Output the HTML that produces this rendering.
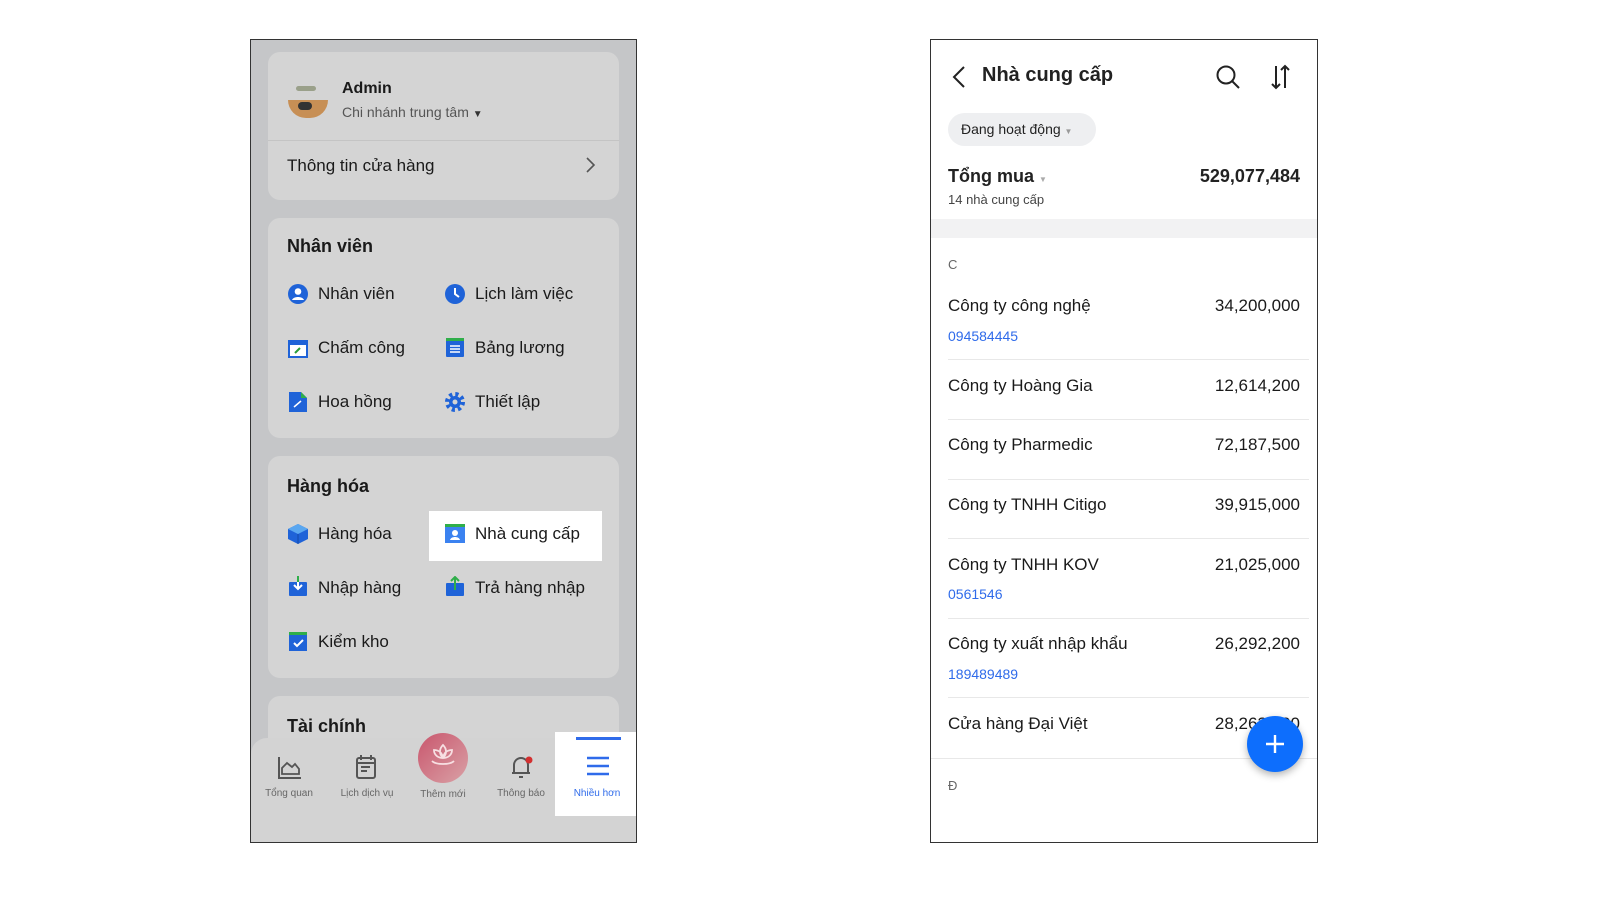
<!DOCTYPE html>
<html><head><meta charset="utf-8"><style>
*{margin:0;padding:0;box-sizing:border-box}
body{width:1600px;height:900px;background:#fff;font-family:"Liberation Sans",sans-serif;position:relative;overflow:hidden;color:#1a1a1a}
.a{position:absolute}
.ph{position:absolute;border:1px solid #333;overflow:hidden}
.card{position:absolute;background:#d4d4d4;border-radius:12px;left:17px;width:351px}
.t{position:absolute;font-size:17px;white-space:nowrap}
.ic{position:absolute;width:20px;height:20px}
.sep{position:absolute;left:17px;right:8px;height:1px;background:#e8e8e8}
</style></head><body>
<!-- LEFT PHONE -->
<div class="ph" style="left:250px;top:39px;width:387px;height:804px;background:#c5c6c8">
 <div class="card" style="top:12px;height:148px">
  <div class="a" style="left:20px;top:34px;width:40px;height:36px">
   <div class="a" style="left:8px;top:0;width:20px;height:5px;background:#9aa08a;border-radius:3px"></div>
   <div class="a" style="left:0;top:14px;width:40px;height:18px;border-radius:0 0 20px 20px;background:#c78f55"></div>
   <div class="a" style="left:10px;top:16px;width:14px;height:8px;background:#333;border-radius:4px"></div>
  </div>
  <div class="t" style="left:74px;top:28px;font-weight:bold;font-size:16px">Admin</div>
  <div class="t" style="left:74px;top:52px;font-size:14px;color:#555">Chi nhánh trung tâm <span style="font-size:10px;color:#333">▼</span></div>
  <div class="a" style="left:0;right:0;top:88px;height:1px;background:#c4c4c4"></div>
  <div class="t" style="left:19px;top:104px">Thông tin cửa hàng</div>
  <svg class="a" style="left:316px;top:104px" width="14" height="18"><path d="M3 2l7 7-7 7" fill="none" stroke="#555" stroke-width="1.6"/></svg>
 </div>
 <div class="card" style="top:178px;height:220px">
  <div class="t" style="left:19px;top:18px;font-size:18px;font-weight:bold">Nhân viên</div>
  <svg class="ic" style="left:20px;top:66px"><circle cx="10" cy="10" r="10" fill="#1f63d8"/><circle cx="10" cy="7.5" r="3.3" fill="#fff"/><path d="M4 16c1.5-4 10.5-4 12 0" fill="#fff"/></svg>
  <div class="t" style="left:50px;top:66px">Nhân viên</div>
  <svg class="ic" style="left:177px;top:66px"><circle cx="10" cy="10" r="10" fill="#1f63d8"/><path d="M10 4v6l4 3" stroke="#fff" stroke-width="2" fill="none"/></svg>
  <div class="t" style="left:207px;top:66px">Lịch làm việc</div>
  <svg class="ic" style="left:20px;top:120px"><rect x="1" y="3" width="18" height="16" fill="#fff" stroke="#1f63d8" stroke-width="2"/><rect x="1" y="3" width="18" height="4" fill="#1f63d8"/><path d="M7 15l5-5" stroke="#2a9d3a" stroke-width="2"/></svg>
  <div class="t" style="left:50px;top:120px">Chấm công</div>
  <svg class="ic" style="left:178px;top:120px"><rect x="0" y="0" width="18" height="19" rx="1" fill="#1f63d8"/><rect x="0" y="0" width="18" height="3" fill="#2fae4a"/><path d="M4 8h10M4 11h10M4 14h10" stroke="#fff" stroke-width="1.5"/></svg>
  <div class="t" style="left:207px;top:120px">Bảng lương</div>
  <svg class="ic" style="left:21px;top:174px"><path d="M0 0h12l6 6v14H0z" fill="#1f63d8"/><path d="M12 0l6 6h-6z" fill="#2fae4a"/><path d="M5 15l7-6" stroke="#fff" stroke-width="1.5"/></svg>
  <div class="t" style="left:50px;top:174px">Hoa hồng</div>
  <svg class="ic" style="left:177px;top:174px"><circle cx="10" cy="10" r="7.5" fill="none" stroke="#1f63d8" stroke-width="5" stroke-dasharray="3 2.9"/><circle cx="10" cy="10" r="6" fill="#1f63d8"/><circle cx="10" cy="10" r="2.5" fill="#d4d4d4"/></svg>
  <div class="t" style="left:207px;top:174px">Thiết lập</div>
 </div>
 <div class="card" style="top:416px;height:222px">
  <div class="t" style="left:19px;top:20px;font-size:18px;font-weight:bold">Hàng hóa</div>
  <svg class="ic" style="left:20px;top:68px"><path d="M10 0l10 5v10l-10 5-10-5V5z" fill="#1f63d8"/><path d="M10 0l10 5-10 5-10-5z" fill="#5aa7f0"/><path d="M10 10v10" stroke="#134aa8" stroke-width="1"/></svg>
  <div class="t" style="left:50px;top:68px">Hàng hóa</div>
  <div class="a" style="left:161px;top:55px;width:173px;height:50px;background:#fff"></div>
  <svg class="ic" style="left:177px;top:68px"><rect width="20" height="19" fill="#3b82f0"/><rect width="20" height="3" fill="#2fae4a"/><circle cx="10" cy="9" r="3" fill="#fff"/><path d="M5 16c1-4 9-4 10 0z" fill="#fff"/></svg>
  <div class="t" style="left:207px;top:68px">Nhà cung cấp</div>
  <svg class="ic" style="left:21px;top:120px"><rect y="6" width="18" height="14" rx="1" fill="#1f63d8"/><path d="M9 2v10M5 9l4 4 4-4" stroke="#fff" stroke-width="2" fill="none"/><path d="M9 0v6" stroke="#2fae4a" stroke-width="2"/></svg>
  <div class="t" style="left:50px;top:122px">Nhập hàng</div>
  <svg class="ic" style="left:178px;top:120px"><rect y="7" width="18" height="13" rx="1" fill="#1f63d8"/><path d="M9 14V1M5 5l4-4 4 4" stroke="#2fae4a" stroke-width="2" fill="none"/></svg>
  <div class="t" style="left:207px;top:122px">Trả hàng nhập</div>
  <svg class="ic" style="left:21px;top:176px"><rect width="18" height="19" fill="#1f63d8"/><rect width="18" height="3" fill="#2fae4a"/><path d="M5 11l3 3 6-6" stroke="#fff" stroke-width="2" fill="none"/></svg>
  <div class="t" style="left:50px;top:176px">Kiểm kho</div>
 </div>
 <div class="card" style="top:656px;height:120px">
  <div class="t" style="left:19px;top:20px;font-size:18px;font-weight:bold">Tài chính</div>
 </div>
 <div class="a" style="left:0;top:698px;width:386px;height:110px;background:#d3d3d3;border-radius:16px 16px 0 0"></div>
 <div class="a" style="left:304px;top:692px;width:82px;height:84px;background:#fff"></div>
 <div class="a" style="left:325px;top:697px;width:45px;height:3px;background:#2f6bea"></div>
 <svg class="a" style="left:26px;top:715px" width="26" height="26"><path d="M2 2v21h22" stroke="#555" stroke-width="2" fill="none"/><path d="M5 19v-6l5-5 5 4 3-3 4 5v5z" stroke="#555" stroke-width="1.8" fill="none"/></svg>
 <div class="t" style="left:0;width:76px;text-align:center;top:748px;font-size:10px;color:#666">Tổng quan</div>
 <svg class="a" style="left:104px;top:714px" width="22" height="26"><rect x="2" y="4" width="18" height="20" rx="2" stroke="#555" stroke-width="2" fill="none"/><path d="M6 1v5M16 1v5M2 9h18M6 13h9M6 17h6" stroke="#555" stroke-width="2"/></svg>
 <div class="t" style="left:78px;width:76px;text-align:center;top:748px;font-size:10px;color:#666">Lịch dịch vụ</div>
 <div class="a" style="left:167px;top:693px;width:50px;height:50px;border-radius:50%;background:linear-gradient(135deg,#c9566d,#d9a1a6)"></div>
 <svg class="a" style="left:177px;top:703px" width="30" height="26"><path d="M15 2c4 4 4 9 0 13-4-4-4-9 0-13zM15 15c-5 0-9-3-9-8 4 0 8 2 9 8zM15 15c5 0 9-3 9-8-4 0-8 2-9 8zM4 18c4 4 18 4 22 0" stroke="#f7dfe2" stroke-width="1.8" fill="none"/></svg>
 <div class="t" style="left:154px;width:76px;text-align:center;top:749px;font-size:10px;color:#666">Thêm mới</div>
 <svg class="a" style="left:258px;top:713px" width="26" height="28"><path d="M5 20V12a7 7 0 0 1 14 0v8zM3 20h18M10 24h4" stroke="#555" stroke-width="2" fill="none"/><circle cx="20" cy="7" r="3.5" fill="#d32f2f"/></svg>
 <div class="t" style="left:232px;width:76px;text-align:center;top:748px;font-size:10px;color:#666">Thông báo</div>
 <svg class="a" style="left:335px;top:715px" width="24" height="22"><path d="M1 3h22M1 11h22M1 19h22" stroke="#2f6bea" stroke-width="2.4"/></svg>
 <div class="t" style="left:308px;width:76px;text-align:center;top:748px;font-size:10px;color:#2f6bea">Nhiều hơn</div>
</div>

<!-- RIGHT PHONE -->
<div class="ph" style="left:930px;top:39px;width:388px;height:804px;background:#fff">
 <svg class="a" style="left:20px;top:24px" width="16" height="26"><path d="M13 3L3 13l10 10" stroke="#222" stroke-width="2" fill="none"/></svg>
 <div class="t" style="left:51px;top:24px;font-size:20px;font-weight:bold;color:#222">Nhà cung cấp</div>
 <svg class="a" style="left:284px;top:24px" width="28" height="28"><circle cx="11" cy="11" r="8.5" stroke="#222" stroke-width="2" fill="none"/><path d="M17 17l7 7" stroke="#222" stroke-width="2"/></svg>
 <svg class="a" style="left:338px;top:24px" width="24" height="28"><path d="M7 2v22M3 20l4 4 4-4M16 24V2M12 6l4-4 4 4" stroke="#222" stroke-width="2" fill="none"/></svg>
 <div class="a" style="left:17px;top:73px;width:148px;height:33px;border-radius:17px;background:#eeeff1"></div>
 <div class="t" style="left:30px;top:81px;font-size:14px;color:#222">Đang hoạt động <span style="font-size:8px;color:#999">▼</span></div>
 <div class="t" style="left:17px;top:126px;font-size:18px;font-weight:bold;color:#222">Tổng mua <span style="font-size:8px;color:#aaa;font-weight:normal">▼</span></div>
 <div class="t" style="right:17px;top:126px;font-size:18px;font-weight:bold;color:#222">529,077,484</div>
 <div class="t" style="left:17px;top:152px;font-size:13px;color:#444">14 nhà cung cấp</div>
 <div class="a" style="left:0;right:0;top:179px;height:19px;background:#f2f2f3"></div>
 <div class="t" style="left:17px;top:217px;font-size:13px;color:#666">C</div>

 <div class="t" style="left:17px;top:256px">Công ty công nghệ</div><div class="t" style="right:17px;top:256px">34,200,000</div>
 <div class="t" style="left:17px;top:288px;font-size:14px;color:#2f6bea">094584445</div>
 <div class="sep" style="top:319px"></div>
 <div class="t" style="left:17px;top:336px">Công ty Hoàng Gia</div><div class="t" style="right:17px;top:336px">12,614,200</div>
 <div class="sep" style="top:379px"></div>
 <div class="t" style="left:17px;top:395px">Công ty Pharmedic</div><div class="t" style="right:17px;top:395px">72,187,500</div>
 <div class="sep" style="top:439px"></div>
 <div class="t" style="left:17px;top:455px">Công ty TNHH Citigo</div><div class="t" style="right:17px;top:455px">39,915,000</div>
 <div class="sep" style="top:498px"></div>
 <div class="t" style="left:17px;top:515px">Công ty TNHH KOV</div><div class="t" style="right:17px;top:515px">21,025,000</div>
 <div class="t" style="left:17px;top:546px;font-size:14px;color:#2f6bea">0561546</div>
 <div class="sep" style="top:578px"></div>
 <div class="t" style="left:17px;top:594px">Công ty xuất nhập khẩu</div><div class="t" style="right:17px;top:594px">26,292,200</div>
 <div class="t" style="left:17px;top:626px;font-size:14px;color:#2f6bea">189489489</div>
 <div class="sep" style="top:657px"></div>
 <div class="t" style="left:17px;top:674px">Cửa hàng Đại Việt</div><div class="t" style="right:17px;top:674px">28,263,000</div>
 <div class="a" style="left:0;right:0;top:718px;height:1px;background:#e8e8e8"></div>
 <div class="t" style="left:17px;top:738px;font-size:13px;color:#666">Đ</div>
 <div class="a" style="left:316px;top:676px;width:56px;height:56px;border-radius:50%;background:#0d6efd;box-shadow:0 3px 8px rgba(0,0,0,.3)"></div>
 <svg class="a" style="left:332px;top:692px" width="24" height="24"><path d="M12 3v18M3 12h18" stroke="#fff" stroke-width="2.4"/></svg>
</div>
</body></html>
